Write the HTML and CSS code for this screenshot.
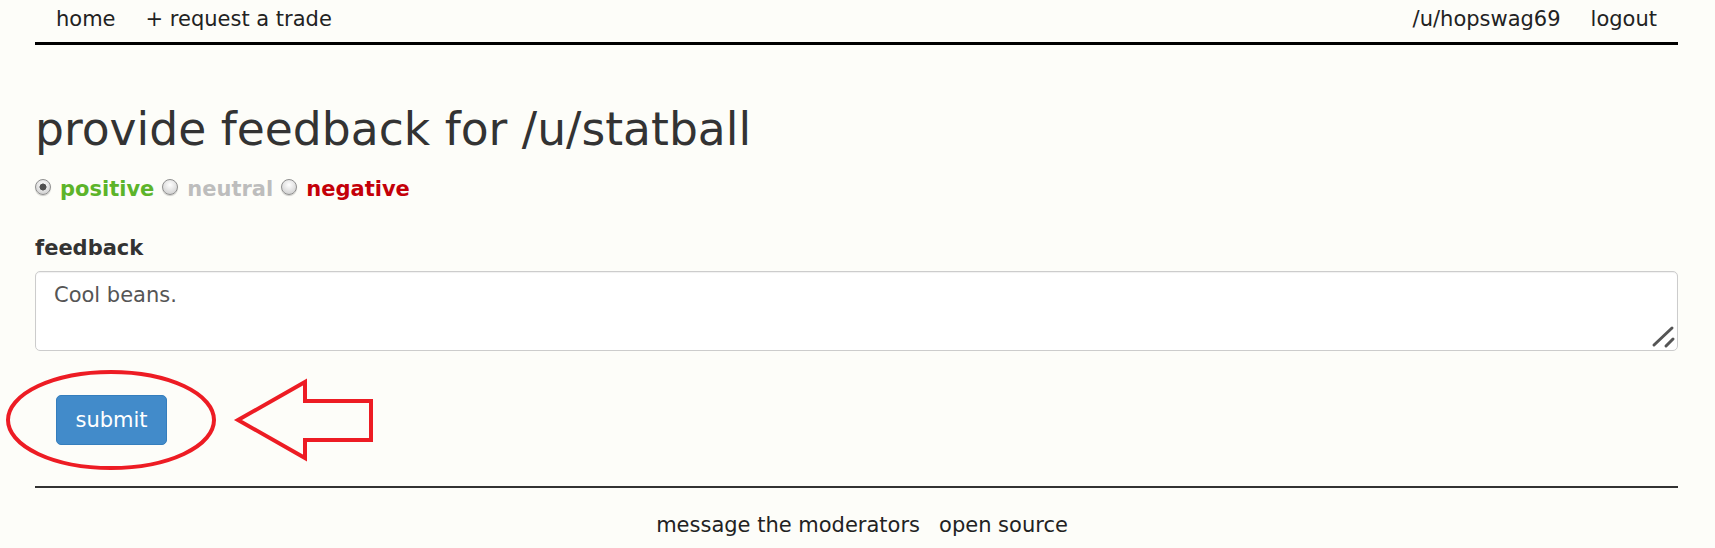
FILE: index.html
```html
<!DOCTYPE html>
<html lang="en">
<head>
<meta charset="utf-8">
<title>provide feedback</title>
<link rel="stylesheet" href="styles.css">
</head>
<body>
<div class="page">
  <nav class="topnav">
    <div class="nav-group">
      <a class="nav-link" href="#">home</a>
      <a class="nav-link" href="#">+ request a trade</a>
    </div>
    <div class="nav-group">
      <a class="nav-link" href="#">/u/hopswag69</a>
      <a class="nav-link" href="#">logout</a>
    </div>
  </nav>
  <main class="content">
    <h1 class="title">provide feedback for /u/statball</h1>
    <div class="rating">
      <label class="opt"><input class="radio" type="radio" name="rating" checked><span class="opt-text pos">positive</span></label>
      <label class="opt"><input class="radio" type="radio" name="rating"><span class="opt-text neu">neutral</span></label>
      <label class="opt"><input class="radio" type="radio" name="rating"><span class="opt-text neg">negative</span></label>
    </div>
    <label class="field-label" for="fb">feedback</label>
    <div class="textarea-wrap">
      <textarea class="feedback" id="fb">Cool beans.</textarea>
      <svg class="grip" width="26" height="26" viewBox="0 0 26 26">
        <line x1="3" y1="21" x2="21" y2="4" stroke="#555" stroke-width="3" stroke-linecap="round"/>
        <line x1="15" y1="22" x2="22" y2="15" stroke="#555" stroke-width="3" stroke-linecap="round"/>
      </svg>
    </div>
    <button class="submit" type="button">submit</button>
  </main>
  <footer class="footer">
    <a class="foot-link" href="#">message the moderators</a>
    <a class="foot-link" href="#">open source</a>
  </footer>
</div>
<svg class="annot" width="1715" height="548" viewBox="0 0 1715 548">
  <ellipse cx="111" cy="420" rx="103" ry="48" fill="none" stroke="#ed1c24" stroke-width="4"/>
  <polygon points="238,420 305,382 305,401 371,401 371,440 305,440 305,458" fill="none" stroke="#ed1c24" stroke-width="4" stroke-linejoin="miter"/>
</svg>
</body>
</html>
```

FILE: styles.css
```css
html, body {
  margin: 0;
  padding: 0;
}
body {
  background: #fdfdf9;
  font-family: "DejaVu Sans", Verdana, sans-serif;
  font-size: 21px;
  color: #222;
  position: relative;
  width: 1715px;
  height: 548px;
  overflow: hidden;
}
.page {
  margin: 0 37px 0 35px;
}
.topnav {
  display: flex;
  justify-content: space-between;
  padding: 0 6px 4px;
  line-height: 38px;
  border-bottom: 3px solid #000;
}
.nav-group {
  display: flex;
}
.nav-link {
  color: #222;
  text-decoration: none;
  padding: 0 15px;
}
.content {
  display: flex;
  flex-direction: column;
  align-items: flex-start;
}
.title {
  margin: 60px 0 0;
  font-size: 45.6px;
  font-weight: normal;
  line-height: 50px;
  color: #333;
}
.rating {
  display: flex;
  align-items: center;
  margin-top: 22px;
  line-height: 24px;
  height: 24px;
}
.opt {
  display: flex;
  align-items: center;
  margin-right: 8px;
}
.radio {
  appearance: none;
  -webkit-appearance: none;
  box-sizing: border-box;
  width: 16px;
  height: 16px;
  margin: 0 9px 5px 0;
  border-radius: 50%;
  border: 1px solid #8f8f8f;
  background: radial-gradient(circle at 50% 35%, #ffffff 0, #e6e6e6 45%, #c6c6c6 100%);
  box-shadow: 0 1px 1px rgba(0, 0, 0, 0.2);
}
.radio:checked {
  background: radial-gradient(circle, #505050 0, #505050 3.2px, rgba(80,80,80,0) 3.8px),
              radial-gradient(circle at 50% 35%, #ffffff 0, #e6e6e6 45%, #c6c6c6 100%);
}
.opt-text {
  font-weight: bold;
}
.pos { color: #5cb42a; }
.neu { color: #bdbdbd; }
.neg { color: #c40009; }
.field-label {
  margin-top: 35px;
  font-weight: bold;
  line-height: 24px;
  color: #333;
}
.textarea-wrap {
  position: relative;
  width: 100%;
  margin-top: 11px;
}
.feedback {
  display: block;
  box-sizing: border-box;
  width: 100%;
  height: 80px;
  margin: 0;
  padding: 9px 18px;
  border: 1px solid #cccccc;
  border-radius: 5px;
  background: #fff;
  font-family: "DejaVu Sans", Verdana, sans-serif;
  font-size: 21px;
  line-height: 28px;
  color: #555;
  resize: none;
  box-shadow: inset 0 1px 1px rgba(0, 0, 0, 0.06);
}
.grip {
  position: absolute;
  right: 1px;
  bottom: 1px;
  pointer-events: none;
}
.submit {
  box-sizing: border-box;
  margin: 44px 0 0 21px;
  width: 111px;
  height: 50px;
  padding: 0;
  background: #428bca;
  border: 1px solid #357ebd;
  border-radius: 5px;
  color: #fff;
  font-family: "DejaVu Sans", Verdana, sans-serif;
  font-size: 21px;
  line-height: 24px;
}
.footer {
  margin-top: 41px;
  border-top: 2px solid #333;
  padding: 25px 0 0 11px;
  display: flex;
  justify-content: center;
  gap: 19px;
  line-height: 24px;
}
.foot-link {
  color: #222;
  text-decoration: none;
}
.annot {
  position: absolute;
  left: 0;
  top: 0;
  pointer-events: none;
}
```
